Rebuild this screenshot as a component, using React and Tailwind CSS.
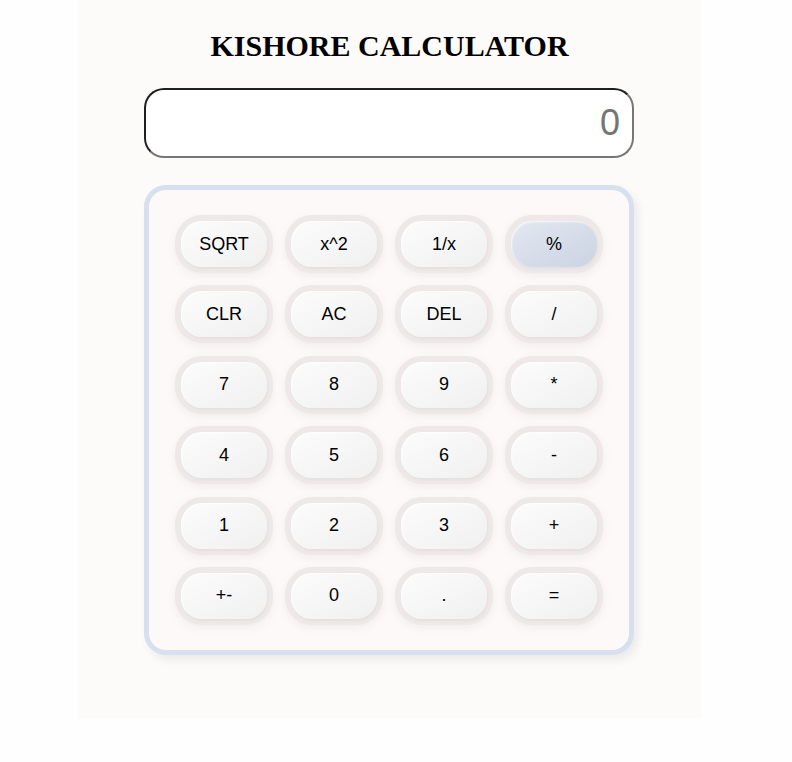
const ROWS = [
  ['SQRT', 'x^2', '1/x', '%'],
  ['CLR', 'AC', 'DEL', '/'],
  ['7', '8', '9', '*'],
  ['4', '5', '6', '-'],
  ['1', '2', '3', '+'],
  ['+-', '0', '.', '='],
];

function Key({ label, active }) {
  return (
    <div className="rounded-[27px] bg-[#eee9e8] p-[6px] shadow-[0_3px_8px_rgba(120,100,100,0.08)]">
      <button
        className={`flex h-[46px] w-full items-center justify-center rounded-[21px] text-[18px] text-black shadow-[inset_1px_1px_2px_rgba(255,255,255,0.8),1px_2px_3px_rgba(0,0,0,0.04)] ${
          active
            ? 'bg-gradient-to-br from-[#e3e8f1] to-[#cbd3e2]'
            : 'bg-gradient-to-br from-[#fcfcfc] to-[#f0f0f0]'
        }`}
        style={{ fontFamily: '"Liberation Sans", Arial, sans-serif' }}
      >
        {label}
      </button>
    </div>
  );
}

export default function App() {
  return (
    <div className="min-h-[762px] bg-[#fefefe]">
      <div className="ml-[78px] w-[623px] bg-[#fcfbfa] pt-[29px] pb-[64px]">
        <h1
          className="text-center text-[30px] font-bold leading-[34px] text-black"
          style={{ fontFamily: '"Liberation Serif", "Times New Roman", serif' }}
        >
          KISHORE CALCULATOR
        </h1>

        {/* Display */}
        <div className="ml-[66px] mt-[25px] flex h-[70px] w-[490px] items-center justify-end rounded-[20px] border-2 border-t-[#1f1f1f] border-l-[#1f1f1f] border-b-[#767676] border-r-[#767676] bg-white pr-[12px]">
          <span
            className="text-[36px] text-[#757575]"
            style={{ fontFamily: '"Liberation Sans", Arial, sans-serif' }}
          >
            0
          </span>
        </div>

        {/* Keypad */}
        <div className="ml-[66px] mt-[27px] w-[490px] rounded-[22px] border-[5px] border-[#d6e0ee] bg-[#fdf9f8] px-[26px] pt-[25px] pb-[25px] shadow-[4px_5px_10px_rgba(0,0,0,0.07)]">
          <div className="grid grid-cols-4 gap-x-[12px] gap-y-[12.4px]">
            {ROWS.flat().map((k) => (
              <Key key={k} label={k} active={k === '%'} />
            ))}
          </div>
        </div>
      </div>
    </div>
  );
}
